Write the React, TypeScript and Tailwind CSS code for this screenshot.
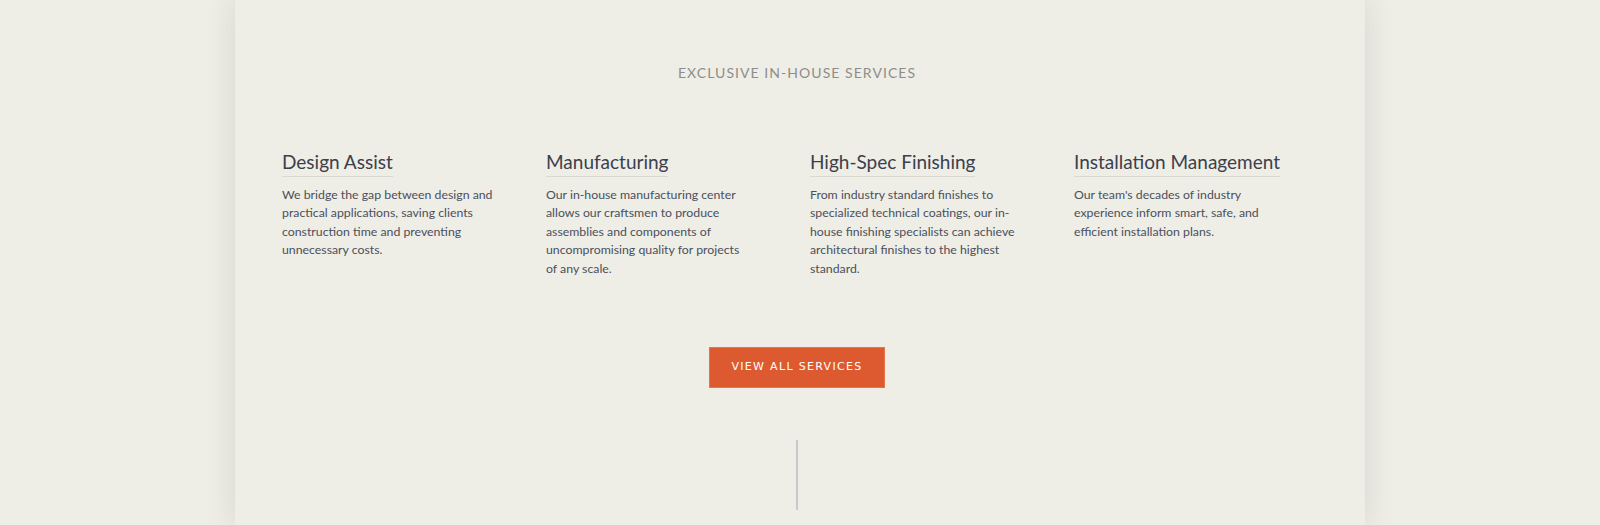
import React from "react";

type Service = {
  title: string;
  body: string;
};

const services: Service[] = [
  {
    title: "Design Assist",
    body: "We bridge the gap between design and practical applications, saving clients construction time and preventing unnecessary costs.",
  },
  {
    title: "Manufacturing",
    // keep "of any" together so the last line doesn't end on a lone word
    body: "Our in-house manufacturing center allows our craftsmen to produce assemblies and components of uncompromising quality for projects of\u00A0any scale.",
  },
  {
    title: "High-Spec Finishing",
    body: "From industry standard finishes to specialized technical coatings, our in-house finishing specialists can achieve architectural finishes to the highest standard.",
  },
  {
    title: "Installation Management",
    body: "Our team's decades of industry experience inform smart, safe, and efficient installation plans.",
  },
];

function ServiceCard({ service }: { service: Service }) {
  return (
    <div className="min-w-0">
      <h3 className="inline-block border-b border-[#d9d8d1] pb-[1px] text-[19px] leading-[26px] text-[#3b404c] [font-family:Lato,'Open_Sans',sans-serif]">
        {service.title}
      </h3>
      <p className="mt-[9px] w-[214px] text-[12.3px] leading-[18.4px] text-[#4b505c] [font-family:Lato,'Open_Sans',sans-serif]">
        {service.body}
      </p>
    </div>
  );
}

export default function App() {
  return (
    <div className="flex min-h-[525px] justify-center overflow-hidden bg-[#eeede6]">
      <section className="flex w-[1130px] flex-col items-center bg-[#eeede6] pr-[6px] pt-[63px] shadow-[0_0_28px_rgba(60,55,40,0.13)]">
        <h2 className="text-[14px] leading-5 tracking-[0.075em] text-[#8d8e8b] [font-family:Lato,sans-serif]">
          EXCLUSIVE IN-HOUSE SERVICES
        </h2>

        <div className="mt-[66px] grid w-full grid-cols-4 pl-[47px] pr-[21px]">
          {services.map((s) => (
            <ServiceCard key={s.title} service={s} />
          ))}
        </div>

        <a
          href="#"
          className="mt-[69px] flex h-[41px] w-[176px] items-center justify-center border border-[#e9734d] bg-[#dd5a31] text-[11px] tracking-[0.12em] text-white [font-family:'DejaVu_Sans',sans-serif]"
        >
          VIEW ALL SERVICES
        </a>

        <div className="mt-[52px] h-[70px] w-[2px] bg-[#c9c9cc]" />
      </section>
    </div>
  );
}
